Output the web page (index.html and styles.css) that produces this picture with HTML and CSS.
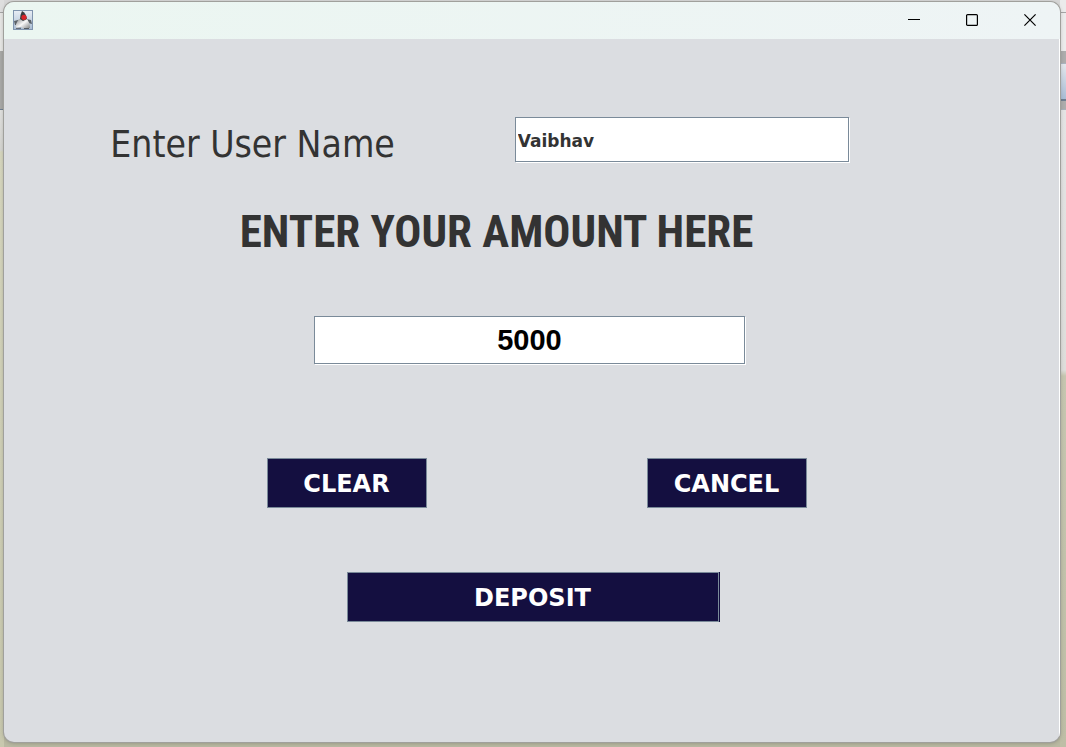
FILE: index.html
```html
<!DOCTYPE html>
<html lang="en">
<head>
<meta charset="utf-8">
<title>Deposit</title>
<link rel="stylesheet" href="styles.css">
</head>
<body>
<div class="window">
  <header class="titlebar">
    <svg class="app-icon" width="20" height="20" viewBox="0 0 20 20" aria-hidden="true">
      <defs>
        <linearGradient id="sky" x1="0" y1="0" x2="0" y2="1"><stop offset="0" stop-color="#e9eef5"/><stop offset="1" stop-color="#a9bdd3"/></linearGradient>
        <linearGradient id="fur" x1="0" y1="0" x2="1" y2="1"><stop offset="0" stop-color="#7d7f81"/><stop offset=".5" stop-color="#f8f8f8"/><stop offset="1" stop-color="#7a7c7e"/></linearGradient>
      </defs>
      <rect x=".5" y=".5" width="19" height="19" fill="url(#sky)" stroke="#8094ae"/>
      <path d="M1 11l4-1 3 1-2 4-4 0zM13 9l5 1 1 4-4-1z" fill="#5b6268"/>
      <path d="M6 9Q2 14 3 18L8 17 11 19 17 18Q17 12 13 8z" fill="url(#fur)"/>
      <path d="M9 1Q7 5 7 9L10 11 14 9Q13 3 9 1z" fill="#383a3e"/>
      <circle cx="11" cy="7.3" r="2.6" fill="#d8232a"/>
      <path d="M3 18.3h5M11 18.5h5" stroke="#555b61"/>
    </svg>
    <div class="controls">
      <button class="control" type="button" aria-label="Minimize"><svg width="12" height="12" viewBox="0 0 12 12"><path d="M0 5.5h12"/></svg></button>
      <button class="control" type="button" aria-label="Maximize"><svg width="12" height="12" viewBox="0 0 12 12"><rect x=".6" y=".6" width="10.8" height="10.8" rx="1"/></svg></button>
      <button class="control" type="button" aria-label="Close"><svg width="12" height="12" viewBox="0 0 12 12"><path d="M.4.4l11.2 11.2M11.6.4L.4 11.6"/></svg></button>
    </div>
  </header>
  <form class="form">
    <div class="user-row">
      <label class="user-label" for="user">Enter User Name</label>
      <input class="field user-field" id="user" type="text" value="Vaibhav">
    </div>
    <label class="amount-label" for="amount">ENTER YOUR AMOUNT HERE</label>
    <input class="field amount-field" id="amount" type="text" value="5000">
    <div class="actions">
      <button class="action" type="button">CLEAR</button>
      <button class="action" type="button">CANCEL</button>
    </div>
    <button class="action deposit" type="button">DEPOSIT</button>
  </form>
</div>
</body>
</html>
```
FILE: styles.css
```css
* { box-sizing: border-box; }
body {
  margin: 0;
  min-height: 100vh;
  padding: 2px 6px 5px 4px;
  display: flex;
  background:
    linear-gradient(#ebebeb 12px, #a5a5a5 12px, #a5a5a5 13px, #ececec 13px, #ececec 51px, #adadad 51px, #adadad 63px, #6f7f91 63px, #e4e8ed 64px, #a9bdd5 99px, #6f7f91 99px, #6f7f91 101px, #adadad 101px, #adadad 109px, #6f7f91 109px, #e4e4e4 110px, #dededb 370px, #c6c6b0 376px, #bebea6) right / 6px 100% no-repeat,
    linear-gradient(#dedede 12px, #a5a5a5 12px, #a5a5a5 13px, #e6e6e4 13px, #e6e6e4 51px, #a8a8a6 51px, #a8a8a6 109px, #6f7f91 109px, #6f7f91 110px, #e0e0de 110px, #d4d4d0 150px, #d6d6be 152px, #c8c8ae) left / 4px 100% no-repeat,
    linear-gradient(#d6d6d6 50%, #b9b9a2 50%);
  font-family: "Liberation Sans", Arial, sans-serif;
}
.window {
  flex: 1;
  display: flex;
  flex-direction: column;
  overflow: hidden;
  border-radius: 10px;
  background: #dbdde1;
  box-shadow: 0 0 0 1px #a0a09c, 0 1px 4px #00000040;
}
.titlebar {
  height: 37px;
  padding: 0 1px 2px 9px;
  display: flex;
  align-items: center;
  justify-content: space-between;
  background: linear-gradient(90deg, #ebf6f1, #eef4f5);
}
.controls { display: flex; align-self: stretch; }
.control {
  width: 58px;
  padding: 0;
  border: 0;
  display: grid;
  place-items: center;
  background: none;
}
.control svg { fill: none; stroke: #000; stroke-width: 1.2; }
.form {
  flex: 1;
  border-right: 1px solid #fff;
  padding: 78px 0 120px;
  display: flex;
  flex-direction: column;
  align-items: center;
}
.user-row {
  width: 70%;
  margin-right: 104px;
  display: flex;
  align-items: flex-start;
  justify-content: space-between;
}
.user-label {
  color: #333;
  font: 37px/56px "DejaVu Sans Condensed", Tahoma, "Noto Sans", sans-serif;
  white-space: nowrap;
}
.field {
  border: 1px solid #7a8a99;
  border-radius: 0;
  background: #fff;
  box-shadow: 1px 1px 0 #fff;
}
.user-field {
  width: 334px;
  height: 45px;
  padding: 2px 2px 0;
  color: #333;
  font: bold 17px "DejaVu Sans", "Arial Black", sans-serif;
}
.amount-label {
  margin: 32px 70px 0 0;
  color: #333;
  font: bold 45px/54px "Roboto Condensed", "Arial Narrow", sans-serif;
}
.amount-field {
  width: 431px;
  height: 48px;
  margin: 57px 4px 0 0;
  text-align: center;
  color: #000;
  font: bold 29px "Liberation Sans", Arial, sans-serif;
}
.actions {
  width: 540px;
  margin: 94px 0 0 10px;
  display: flex;
  justify-content: space-between;
}
.action {
  width: 160px;
  height: 50px;
  padding: 2px 0 0;
  border: 1px solid #7a8a99;
  color: #fff;
  background: #140f40;
  font: bold 24px "DejaVu Sans", "Arial Black", sans-serif;
}
.deposit {
  width: 372px;
  margin: 64px 0 0 2px;
  box-shadow: 1px 0 0 #140f40;
}
```
